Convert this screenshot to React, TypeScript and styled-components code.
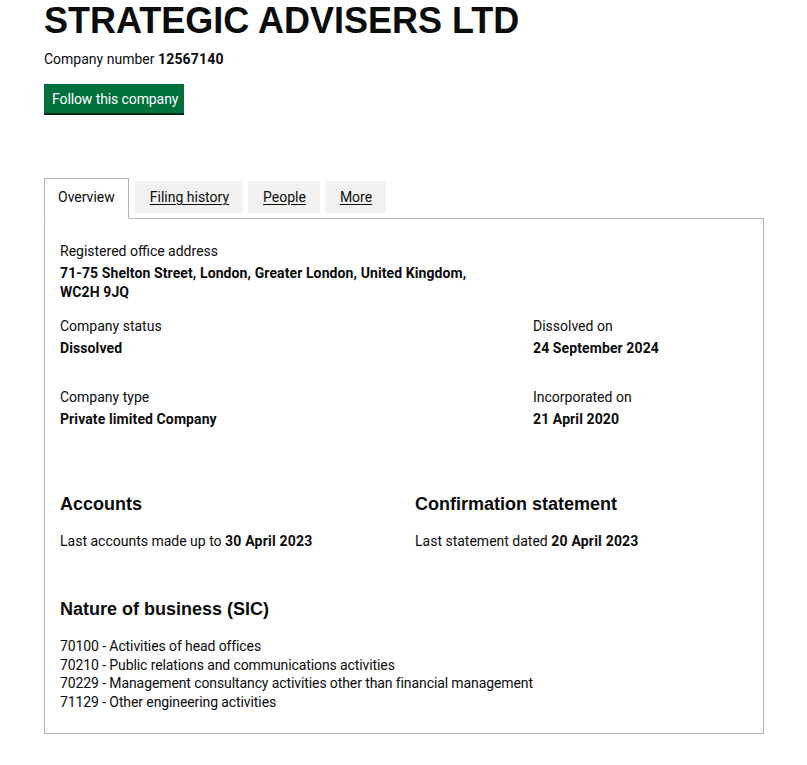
import styled, { createGlobalStyle } from 'styled-components';

const GlobalStyle = createGlobalStyle`
  body {
    margin: 0;
    background: #ffffff;
    color: #0b0c0c;
    font-family: Roboto, "Liberation Sans", Arial, sans-serif;
  }
`

const Page = styled.div`
  padding: 0 44px 30px;
  width: 720px;
`

const Title = styled.h1`
  font-family: "Liberation Sans", Arial, sans-serif;
  font-size: 36px;
  font-weight: 700;
  line-height: 40px;
  margin: 0;
  padding-top: 1px;
`

const CompanyNumber = styled.p`
  font-size: 14px;
  line-height: 20px;
  margin: 8px 0 0;

  strong {
    letter-spacing: 0.2px;
  }
`

const FollowButton = styled.button`
  display: block;
  margin-top: 15px;
  background: #00703c;
  color: #ffffff;
  border: none;
  box-shadow: 0 2px 0 #002d18;
  font-family: Roboto, "Liberation Sans", Arial, sans-serif;
  font-size: 14px;
  line-height: 19px;
  padding: 2px 8px 0;
  width: 140px;
  height: 29px;
  text-align: left;
  white-space: nowrap;
  letter-spacing: -0.1px;
  cursor: pointer;
`

const Tabs = styled.div`
  margin-top: 65px;
`

const TabList = styled.ul`
  list-style: none;
  margin: 0;
  padding: 0;
  display: flex;
  align-items: flex-start;
  gap: 5px;
  position: relative;
  z-index: 1;
  margin-bottom: -1px;
`

const Tab = styled.li<{ $selected?: boolean }>`
  font-size: 14px;
  line-height: 20px;
  ${p => p.$selected
    ? `
      background: #ffffff;
      border: 1px solid #b1b4b6;
      border-bottom: 1px solid #ffffff;
      padding: 8px 13px 11px;
      margin-right: 1px;
    `
    : `
      background: #f3f2f1;
      margin-top: 3px;
      padding: 6px 14px 6px 15px;
      text-decoration: underline;
      text-underline-offset: 2px;
    `}
`

const Panel = styled.div`
  border: 1px solid #b1b4b6;
  padding: 23px 15px 21px;
`

const Row = styled.div<{ $cols: string; $gap?: number }>`
  display: grid;
  grid-template-columns: ${p => p.$cols};
  margin-bottom: ${p => p.$gap ?? 0}px;
`

const Item = styled.dl`
  margin: 0;
`

const Label = styled.dt`
  font-size: 14px;
  line-height: 19px;
  margin-bottom: 3px;
`

const Value = styled.dd<{ $width?: number }>`
  margin: 0;
  font-size: 14px;
  line-height: 19px;
  font-weight: 700;
  letter-spacing: 0.1px;
  max-width: ${p => p.$width ? `${p.$width}px` : 'none'};
`

const Heading = styled.h2`
  font-family: "Liberation Sans", Arial, sans-serif;
  font-size: 18px;
  line-height: 24px;
  font-weight: 700;
  margin: 0 0 16px;
`

const Text = styled.p`
  font-size: 14px;
  line-height: 19px;
  margin: 0;

  strong {
    letter-spacing: 0.2px;
  }
`

const SicList = styled.ul`
  list-style: none;
  margin: 0;
  padding: 0;
`

const SicItem = styled.li`
  font-size: 14px;
  line-height: 18.7px;
  letter-spacing: -0.1px;
`

const sicCodes = [
  '70100 - Activities of head offices',
  '70210 - Public relations and communications activities',
  '70229 - Management consultancy activities other than financial management',
  '71129 - Other engineering activities',
]

export default function App() {
  return (
    <Page>
      <GlobalStyle />
      <Title>STRATEGIC ADVISERS LTD</Title>
      <CompanyNumber>Company number <strong>12567140</strong></CompanyNumber>
      <FollowButton>Follow this company</FollowButton>

      <Tabs>
        <TabList>
          <Tab $selected>Overview</Tab>
          <Tab>Filing history</Tab>
          <Tab>People</Tab>
          <Tab>More</Tab>
        </TabList>
        <Panel>
          <Row $cols="1fr" $gap={15}>
            <Item>
              <Label>Registered office address</Label>
              <Value $width={420}>71-75 Shelton Street, London, Greater London, United Kingdom, WC2H 9JQ</Value>
            </Item>
          </Row>
          <Row $cols="473px 1fr" $gap={30}>
            <Item>
              <Label>Company status</Label>
              <Value>Dissolved</Value>
            </Item>
            <Item>
              <Label>Dissolved on</Label>
              <Value>24 September 2024</Value>
            </Item>
          </Row>
          <Row $cols="473px 1fr" $gap={63}>
            <Item>
              <Label>Company type</Label>
              <Value>Private limited Company</Value>
            </Item>
            <Item>
              <Label>Incorporated on</Label>
              <Value>21 April 2020</Value>
            </Item>
          </Row>
          <Row $cols="355px 1fr" $gap={46}>
            <div>
              <Heading>Accounts</Heading>
              <Text>Last accounts made up to <strong>30 April 2023</strong></Text>
            </div>
            <div>
              <Heading>Confirmation statement</Heading>
              <Text>Last statement dated <strong>20 April 2023</strong></Text>
            </div>
          </Row>
          <Heading>Nature of business (SIC)</Heading>
          <SicList>
            {sicCodes.map(code => <SicItem key={code}>{code}</SicItem>)}
          </SicList>
        </Panel>
      </Tabs>
    </Page>
  );
}
